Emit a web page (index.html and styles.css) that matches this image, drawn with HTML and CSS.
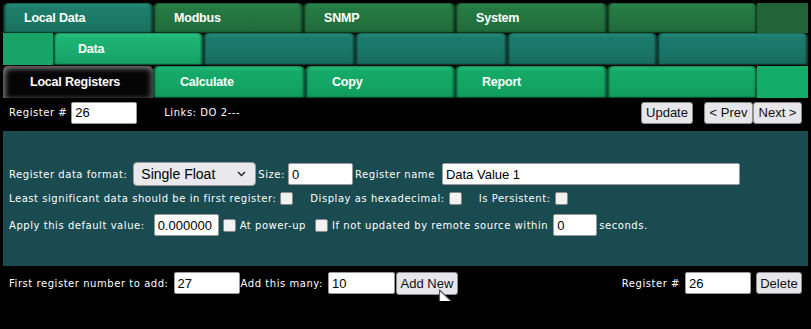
FILE: index.html
```html
<!DOCTYPE html>
<html lang="en">
<head>
    <meta charset="UTF-8">
    <title>Local Registers</title>
    <link rel="stylesheet" href="styles.css">
</head>
<body>
<div class="page">
    <div class="tabs">
        <a class="tab teal w150">Local Data</a>
        <a class="tab green w150">Modbus</a>
        <a class="tab green w152">SNMP</a>
        <a class="tab green w152">System</a>
        <a class="tab green w150"></a>
        <span class="tab-end green-flat"></span>
    </div>
    <div class="tabs row2">
        <span class="tab-start bright-flat"></span>
        <a class="tab bright w150">Data</a>
        <a class="tab teal2 w152"></a>
        <a class="tab teal2 w152"></a>
        <a class="tab teal2 w150"></a>
        <a class="tab teal2 last"></a>
    </div>
    <div class="tabs row3">
        <a class="tab black w150">Local Registers</a>
        <a class="tab mint w152">Calculate</a>
        <a class="tab mint w150">Copy</a>
        <a class="tab mint w152">Report</a>
        <a class="tab mint w150"></a>
        <span class="tab-end mint-flat"></span>
    </div>

    <div class="toolbar">
        <label>Register #</label>
        <input type="text" class="field w66" value="26">
        <span class="links">Links: DO 2---</span>
        <div class="spacer"></div>
        <button class="btn w52">Update</button>
        <button class="btn w49 prev">&lt; Prev</button>
        <button class="btn w49">Next &gt;</button>
    </div>

    <div class="panel">
        <div class="line">
            <label>Register data format:</label>
            <div class="select">Single Float
                <svg class="chev" width="9" height="6" viewBox="0 0 9 6"><path d="M1 1 L4.5 4.5 L8 1" fill="none" stroke="#222" stroke-width="1.4"/></svg>
            </div>
            <label class="ml2">Size:</label>
            <input type="text" class="field w65" value="0">
            <label class="ml2">Register name</label>
            <input type="text" class="field name" value="Data Value 1">
        </div>
        <div class="line">
            <label>Least significant data should be in first register:</label>
            <input type="checkbox" class="check">
            <label class="ml16">Display as hexadecimal:</label>
            <input type="checkbox" class="check">
            <label class="ml16">Is Persistent:</label>
            <input type="checkbox" class="check">
        </div>
        <div class="line third">
            <label>Apply this default value:</label>
            <input type="text" class="field w65 ml10" value="0.000000">
            <input type="checkbox" class="check">
            <label>At power-up</label>
            <input type="checkbox" class="check ml10">
            <label>If not updated by remote source within</label>
            <input type="text" class="field w44 ml4" value="0">
            <label class="ml2">seconds.</label>
        </div>
    </div>

    <div class="addbar">
        <label>First register number to add:</label>
        <input type="text" class="field w66" value="27">
        <label class="ml2">Add this many:</label>
        <input type="text" class="field w67" value="10">
        <button class="btn add">Add New</button>
        <div class="spacer"></div>
        <label>Register #</label>
        <input type="text" class="field w66" value="26">
        <button class="btn del">Delete</button>
    </div>

    <svg class="pointer" width="19" height="26" viewBox="0 0 19 26">
        <path d="M1.5 1 L1.5 19 L6 15 L9.5 23 L12.5 21.8 L9 14 L15 14 Z" fill="#fff" stroke="#555" stroke-width="1.1" stroke-linejoin="round"/>
    </svg>
</div>
</body>
</html>
```

FILE: styles.css
```css
body{
    margin:0;
    background:#000;
    color:#fff;
    font-family:"DejaVu Sans", Verdana, sans-serif;
    font-size:10px;
    letter-spacing:0.55px;
}
.page{
    position:relative;
    width:805px;
    padding:3px 0 0 3px;
}

/* tab rows */
.tabs{
    display:flex;
    height:30px;
}
.tabs.row2{
    height:32px;
}
.tabs.row3{
    height:32px;
    margin-top:1px;
}
.tab{
    display:flex;
    align-items:center;
    box-sizing:border-box;
    padding-left:21px;
    font-family:"Liberation Sans", Arial, sans-serif;
    font-weight:bold;
    font-size:12.5px;
    letter-spacing:-0.2px;
    color:#fff;
    border-radius:5px 5px 1px 1px;
    box-shadow:inset 2px 0 2px rgba(0,0,0,.55), inset -2px 0 2px rgba(0,0,0,.45), inset 0 -1px 1px rgba(0,0,0,.35);
}
.w150{ width:150px; }
.w152{ width:152px; }
.last{ flex:1; }
.row2 .tab{ padding-left:25px; }
.row3 .tab{ padding-left:27px; }
.tab-end{ flex:1; }
.tab-start{ width:50px; }

.teal{ background:linear-gradient(#26917c 0, #1f7d6b 5px, #1d7866 60%, #1a6f5e 100%); }
.green{ background:linear-gradient(#2d8a4c 0, #257a43 5px, #23733f 60%, #1f6a39 100%); }
.green-flat{ background:#216536; }
.bright{ background:linear-gradient(#2ecb88 0, #1db474 5px, #19ab6d 60%, #169e64 100%); }
.bright-flat{ background:#18a467; }
.teal2{ background:linear-gradient(#27907f 0, #1b7b6c 5px, #197566 60%, #166b5d 100%); }
.mint{ background:linear-gradient(#24c07c 0, #15aa68 5px, #12a563 60%, #109a5c 100%); }
.mint-flat{ background:#13ad69; }
.black{
    background:#050505;
    box-shadow:inset 3px 3px 5px #6a6a6a, inset -3px 0 5px #4a4a4a;
}

/* register bar */
.toolbar, .addbar{
    display:flex;
    align-items:center;
    padding:0 6px 0 6px;
}
.toolbar{
    height:33px;
    margin-top:-2px;
}
.toolbar label{
    margin-right:4px;
}
.links{
    margin-left:27px;
}
.spacer{ flex:1; }

.field{
    box-sizing:border-box;
    height:22px;
    border:1px solid #9a9a9a;
    border-radius:2px;
    background:#fff;
    color:#000;
    padding:0 3px;
    font-family:"Liberation Sans", Arial, sans-serif;
    font-size:13px;
    letter-spacing:0;
    outline:0;
}
.w44{ width:44px; }
.w65{ width:65px; }
.w66{ width:66px; }
.w67{ width:67px; }
.name{ width:298px; margin-left:4px; }

.btn{
    box-sizing:border-box;
    height:22px;
    padding:0 2px;
    border:1px solid #8d8d8d;
    border-radius:3px;
    background:#e6e6ea;
    color:#111;
    font-family:"Liberation Sans", Arial, sans-serif;
    font-size:13px;
    letter-spacing:0;
    white-space:nowrap;
}
.w52{ width:52px; }
.w49{ width:49px; }
.prev{
    margin-left:11px;
}

/* main panel */
.panel{
    box-sizing:border-box;
    height:135px;
    margin-top:2px;
    background:#194b50;
    padding:31px 0 0 6px;
}
.line{
    display:flex;
    align-items:center;
    height:24px;
}
.line.third{
    margin-top:3px;
}
.select{
    box-sizing:border-box;
    display:flex;
    align-items:center;
    justify-content:space-between;
    width:123px;
    height:24px;
    margin-left:6px;
    padding:0 9px 0 7px;
    border:1px solid #9a9a9a;
    border-radius:4px;
    background:#e9e9ed;
    color:#000;
    font-family:"Liberation Sans", Arial, sans-serif;
    font-size:14px;
    letter-spacing:0;
}
.check{
    appearance:none;
    box-sizing:border-box;
    width:13px;
    height:13px;
    margin:0 4px;
    border:1px solid #8a8a8a;
    border-radius:2px;
    background:#f2f2f2;
}
.ml2{ margin-left:2px; margin-right:3px; }
.ml4{ margin-left:5px; }
.ml10{ margin-left:9px; }
.ml16{ margin-left:13px; }

/* add bar */
.addbar{
    height:36px;
    margin-top:-1px;
}
.addbar label{
    margin-right:5px;
}
.addbar .ml2{
    margin-left:1px;
}
.add{
    width:62px;
    height:23px;
    margin-left:1px;
}
.del{
    width:46px;
    margin-left:5px;
}

.pointer{
    position:absolute;
    left:438px;
    top:289px;
}
```
